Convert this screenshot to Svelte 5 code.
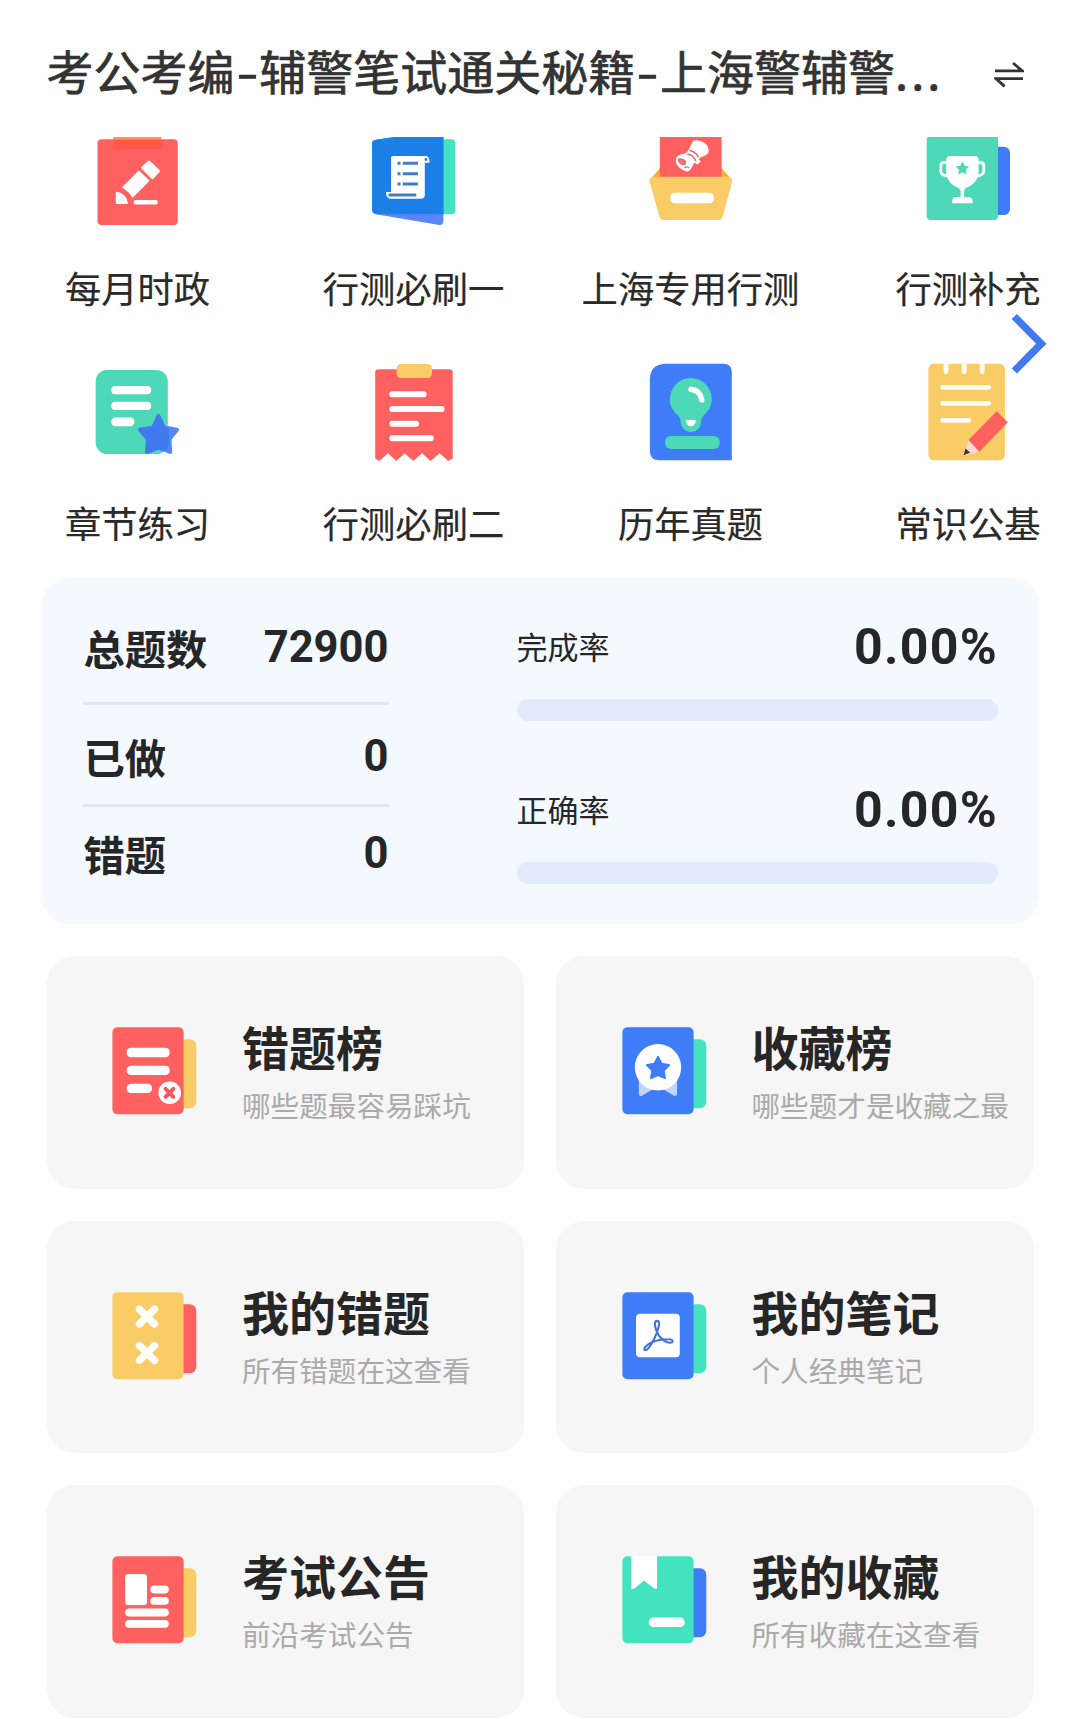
<script>
  const shortcuts = [
    { icon: 'pencil', label: '每月时政' },
    { icon: 'scroll', label: '行测必刷一' },
    { icon: 'box', label: '上海专用行测' },
    { icon: 'trophy', label: '行测补充' },
    { icon: 'starDoc', label: '章节练习' },
    { icon: 'receipt', label: '行测必刷二' },
    { icon: 'bulb', label: '历年真题' },
    { icon: 'notepad', label: '常识公基' },
  ];

  const totals = [
    { label: '总题数', value: '72900' },
    { label: '已做', value: '0' },
    { label: '错题', value: '0' },
  ];

  const rates = [
    { label: '完成率', value: 0 },
    { label: '正确率', value: 0 },
  ];

  const cards = [
    { icon: 'wrongRank', front: 'red', back: 'yellow', title: '错题榜', text: '哪些题最容易踩坑' },
    { icon: 'medal', front: 'blue', back: 'mint', title: '收藏榜', text: '哪些题才是收藏之最' },
    { icon: 'crosses', front: 'yellow', back: 'red', title: '我的错题', text: '所有错题在这查看' },
    { icon: 'notes', front: 'blue', back: 'mint', title: '我的笔记', text: '个人经典笔记' },
    { icon: 'news', front: 'red', back: 'yellow', title: '考试公告', text: '前沿考试公告' },
    { icon: 'bookmark', front: 'mint', back: 'blue', title: '我的收藏', text: '所有收藏在这查看' },
  ];
</script>

{#snippet shortcutIcon(name)}
  {#if name === 'pencil'}
    <rect class="red" x="9.5" y="2.3" width="80.2" height="85.7" rx="4" />
    <rect x="25.6" y="0" width="47.6" height="12" fill="#ff5849" />
    <rect x="25.6" y="0" width="47.6" height="2.6" fill="#ff9450" />
    <g class="white" stroke="#fff" stroke-width="2" stroke-linejoin="round">
      <path d="M61 25 70.5 34 64.5 40.6 54.7 30.8Z" stroke-width="3" />
      <path d="M50.8 34.6 60.2 43.7 44.8 59.4 Q41.5 53.5 35.2 50.4Z" />
      <path d="M28.8 55.8 Q37 57 39 66 H28.8Z" />
    </g>
    <rect class="white" x="45.6" y="63" width="24.2" height="4.5" rx="2" />
  {:else if name === 'scroll'}
    <rect class="mint" x="60" y="2.3" width="31.2" height="75" rx="4" />
    <path d="M8 7Q8 3.4 12 2.8L31 0H79.4V84Q79.4 88.6 74 87.8L12 77.2Q8 76.3 8 72Z" fill="#5b86fb" />
    <path d="M8 7Q8 3.4 12 2.8L31 0H79.4V77.2H12Q8 76.3 8 72Z" fill="#1a80e8" />
    <path class="white" d="M29 19H62Q65.5 19.3 65.5 25.8H60.8V58Q60.8 61.7 57 61.7H26Q22 61 22 55H27V21Q27 19 29 19Z" />
    <g stroke="#3f7fc8" stroke-width="3" fill="none">
      <path d="M33.5 26.3h3M33.5 36.7h3M33.5 47h3M38.8 26.3H54M38.8 36.7H54M38.8 47H54M24.5 58H52.3" />
    </g>
    <circle cx="62" cy="22.5" r="1.4" fill="#1a80e8" />
  {:else if name === 'box'}
    <path d="M19 31 9 43H91L80.5 31Z" fill="#f6ae2e" />
    <rect class="red" x="18.8" y="0" width="61.8" height="42" />
    <path class="yellow" d="M13 39.7H87Q92 40 91 45L81.5 80Q80.5 83 77.5 83H22.5Q19.5 83 18.5 80L8.7 45Q7.8 40 13 39.7Z" />
    <rect class="white" x="29.2" y="55.7" width="43.8" height="10.6" rx="4.5" />
    <path class="white" d="M52 4Q53 3 56 3.3Q67.5 5 67.7 14Q67.5 18 60 20L57.5 22L60 24.5L56.5 27.5L53.5 25.5L49.8 32Q48 35.5 44 34Q36.5 31 34.8 24.7Q34.5 18.5 40 17.3Q45 17 47 14Z" />
    <g fill="none" stroke="#e9646c" stroke-width="1.5">
      <path d="M48.5 13.5Q54.5 14.5 57.5 20M46.2 17Q52.5 18 54.8 24" />
      <path d="M37.5 22Q43 21.5 44.5 25Q44 29 40.5 26.8Q37.5 25.5 37.5 22" fill="#f07880" />
      <path d="M43.5 31Q45.5 28.6 48 31" stroke-width="1.2" />
    </g>
  {:else if name === 'trophy'}
    <rect class="blue" x="60" y="9.7" width="32" height="68.3" rx="6" />
    <path class="green" d="M11 0H80V79Q80 83 76 83H13Q8.7 83 8.7 79V2.5Q8.7 0 11 0Z" />
    <path class="white" d="M30.5 19H58.5L60.6 21.5V37Q58.5 47 47.8 51L46.2 53.5V60H52Q54.5 60.5 54.8 66.3H34Q34.2 60.5 36.8 60H42.6V53.5L40.5 51Q30 47 28.2 37V21.5Z" />
    <path d="M29 25.5H26Q22.8 25.5 22.8 29V34Q23 38.8 30 39M60 25.5H62.6Q65.8 25.5 65.8 29V34Q65.5 38.8 58.5 39" fill="none" stroke="#fff" stroke-width="2.8" />
    <path class="green" d="M44.4 24.5 46.5 28.7 51 29.4 47.8 32.7 48.5 37.4 44.4 35.2 40.2 37.4 41 32.7 37.7 29.4 42.3 28.7Z" />
  {:else if name === 'starDoc'}
    <rect class="green" x="7.7" y="7" width="72.1" height="84" rx="11.5" />
    <g class="white">
      <rect x="23.2" y="23" width="40" height="8.2" rx="4" />
      <rect x="23.2" y="38.8" width="40" height="8.2" rx="4" />
      <rect x="23.2" y="54.6" width="23.2" height="8.6" rx="4.2" />
    </g>
    <path d="M70.5 53 75.8 64.5 89 66.8 81.5 76 82.2 89 70.5 84.5 59 89 59.8 76 52 66.8 65.2 64.5Z" fill="#5487fb" stroke="#5487fb" stroke-width="4" stroke-linejoin="round" />
    <path d="M79.2 67 79.2 80Q78.5 86 75 86.5L70.5 84.5 59 89 59.8 76 52 66.8 65.2 64.5 70.5 53 76 65Z" fill="#3f7bef" stroke="#3f7bef" stroke-width="3.6" stroke-linejoin="round" />
  {:else if name === 'receipt'}
    <path class="red" d="M14.5 6.3H85.5Q88.7 6.3 88.7 9.5V95.5L84.2 97.9 75.6 90.3 66.6 97.9 58 90.3 49.4 97.9 40.6 90.3 32.2 97.9 24 90.3 15.3 97.9 11.2 95.5V9.5Q11.2 6.3 14.5 6.3Z" />
    <rect class="yellow" x="32.6" y="1" width="35.4" height="14" rx="4.5" />
    <path d="M28.3 31.3H59.6M28.3 46H77.5M28.3 60.7H52M28.3 75.3H66.8" fill="none" stroke="#fff" stroke-width="6" stroke-linecap="round" />
  {:else if name === 'bulb'}
    <path class="blue" d="M24 .7H82Q90.8 .7 90.8 9V97.3H18Q8.9 97.3 8.9 88V15.5Q9.5 1.5 24 .7Z" />
    <path class="green" d="M49.8 15A21 21.3 0 0 0 28.8 36.3C28.8 43 32 48 36 51.5Q39.8 55 39.6 59.3A10.2 10 0 0 0 60 59.3Q59.8 55 63.6 51.5C67.6 48 70.8 43 70.8 36.3A21 21.3 0 0 0 49.8 15Z" />
    <path d="M50 26.3Q59.5 27.5 60.8 37" fill="none" stroke="#fff" stroke-width="5.4" stroke-linecap="round" />
    <path class="white" d="M44.7 57.5Q49.8 55.8 55 57.5 54 63.3 49.8 63.3 45.7 63.3 44.7 57.5Z" />
    <rect class="green" x="24" y="73" width="54.8" height="13" rx="6" />
  {:else if name === 'notepad'}
    <rect class="yellow" x="10.4" y=".7" width="76.5" height="96.6" rx="5.5" />
    <path d="M28 0V8.8M46.2 0V8.8M64.2 0V8.8M24.5 24.3H70.8M24.5 40.3H70.8M24.5 57.3H50.8" fill="none" stroke="#fffdf2" stroke-width="4.8" stroke-linecap="round" />
    <path d="M50.7 77 61.4 88.7 45.8 92.2Z" fill="#f8d9d4" />
    <path d="M47.5 85.5 52.2 89.5 45.6 92.3Z" fill="#40382c" />
    <path class="red" d="M78.6 48.3 89.8 59.3 61.4 88.7 50.5 77Z" />
  {/if}
{/snippet}

{#snippet cardIcon(name)}
  {#if name === 'wrongRank'}
    <g class="white">
      <rect x="14.7" y="20.8" width="43" height="9.4" rx="4.2" />
      <rect x="14.7" y="38.7" width="43" height="9.4" rx="4.2" />
      <rect x="14.7" y="56.7" width="25.3" height="9.2" rx="4.2" />
      <circle cx="57.7" cy="65.7" r="11.3" />
    </g>
    <path d="M53.6 61.8 61.4 69.8M61.4 61.8 53.6 69.8" stroke="#f2595e" stroke-width="4" stroke-linecap="round" />
  {:else if name === 'medal'}
    <path d="M16.7 52H55.2L55 67Q54.7 69.5 52 68.8L42.3 63H29.5L20 68.8Q17 69.8 16.9 67Z" fill="#c3d4fe" />
    <circle class="white" cx="36" cy="40.3" r="23.2" />
    <path class="blue" d="M36 30 39.5 36.8 47 38 41.7 43.6 43 51 36 48 29 51 30.3 43.6 25 38 32.5 36.8Z" stroke="#3f7cf8" stroke-width="2" stroke-linejoin="round" />
  {:else if name === 'crosses'}
    <path d="M27.5 17.2 42.5 32M42.5 17.2 27.5 32M27.5 53.6 42.5 68.4M42.5 53.6 27.5 68.4" stroke="#fffefa" stroke-width="7.4" stroke-linecap="round" />
  {:else if name === 'notes'}
    <rect class="white" x="14" y="21.7" width="43.8" height="43.6" rx="4" />
    <path d="M35 28.9C32.2 28.9 32.5 34 34.5 39C37 45 42 50 48 50.8C52 51 51.5 47 46.5 47.2C41 47.2 35 48 30.5 50C25 52.5 21.5 56 22.5 57.7C24 59.3 27 56 29.5 52C32 47.5 36 38 37 33C37.5 30 36.5 28.9 35 28.9Z" fill="none" stroke="#4673d8" stroke-width="2.1" />
  {:else if name === 'news'}
    <g class="white">
      <rect x="13.2" y="18" width="21.8" height="31" rx="3" />
      <rect x="38.3" y="29.6" width="18.5" height="7.8" rx="3.8" />
      <rect x="38.3" y="41" width="18.5" height="7.8" rx="3.8" />
      <rect x="13.2" y="52.6" width="43.6" height="7.8" rx="3.8" />
      <rect x="13.2" y="63.9" width="43.6" height="7.8" rx="3.8" />
    </g>
  {:else if name === 'bookmark'}
    <path class="white" d="M9.3 0H35V32.7H32.5L22 24.6 12 32.7H9.3Z" />
    <rect class="white" x="26.7" y="61.6" width="36" height="9.4" rx="4.4" />
  {/if}
{/snippet}

<main>
  <header>
    <h1>考公考编<span class="dash">-</span>辅警笔试通关秘籍<span class="dash">-</span>上海警辅警<span class="dots">...</span></h1>
    <svg class="swap" width="30" height="30" viewBox="0 0 30 30" aria-hidden="true">
      <path d="M1 11.8H28.2L19 4M29 19.6H2L10.6 27.4" />
    </svg>
  </header>

  <nav>
    {#each shortcuts as item, i}
      <div class="shortcut">
        <svg width="100" height={i < 4 ? 100 : 109} viewBox="0 0 100 {i < 4 ? 100 : 109}" aria-hidden="true">
          {@render shortcutIcon(item.icon)}
        </svg>
        <span>{item.label}</span>
      </div>
    {/each}
    <svg class="next" width="40" height="66" viewBox="0 0 40 66" aria-hidden="true">
      <path d="M5.3 6.5 32.3 33.7 5.3 61" />
    </svg>
  </nav>

  <section class="stats">
    <div class="totals">
      {#each totals as row}
        <div class="total">
          <b>{row.label}</b>
          <strong>{row.value}</strong>
        </div>
      {/each}
    </div>
    <div class="rates">
      {#each rates as rate}
        <div class="rate">
          <div class="rate-head">
            <span>{rate.label}</span>
            <strong>{rate.value.toFixed(2)}%</strong>
          </div>
          <div class="track"><div class="fill" style="width: {rate.value}%"></div></div>
        </div>
      {/each}
    </div>
  </section>

  <section class="cards">
    {#each cards as card}
      <article>
        <svg width="86" height="88" viewBox="0 0 86 88" aria-hidden="true">
          <rect class={card.back} x="50" y="12.2" width="34.3" height="69" rx="6.5" />
          <rect class={card.front} x=".4" y=".2" width="71.2" height="87" rx="5" />
          {@render cardIcon(card.icon)}
        </svg>
        <div class="copy">
          <h2>{card.title}</h2>
          <p>{card.text}</p>
        </div>
      </article>
    {/each}
  </section>
</main>

<style>
  :global(body) {
    margin: 0;
    background: #fefefe;
  }
  main {
    width: 1080px;
    height: 1719px;
    overflow: hidden;
    font-family: 'Noto Sans CJK SC', sans-serif;
    color: #242628;
  }
  svg {
    display: block;
    flex: none;
  }
  .red { fill: #ff6161; }
  .yellow { fill: #f9cc65; }
  .blue { fill: #3f7cf8; }
  .mint { fill: #44e3c0; }
  .green { fill: #4dd8b7; }
  .white { fill: #fff; }

  header {
    box-sizing: border-box;
    height: 137px;
    padding: 2px 56px 0 46.5px;
    display: flex;
    align-items: center;
    justify-content: space-between;
  }
  h1 {
    margin: 0;
    font-size: 47px;
    line-height: 60px;
    font-weight: 400;
    color: #333;
    white-space: nowrap;
    -webkit-text-stroke: 0.7px #333;
  }
  .dash {
    display: inline-block;
    width: 24.8px;
    text-align: center;
    transform: scaleX(1.35);
  }
  .dots {
    letter-spacing: 3px;
  }
  .swap {
    margin-top: 8px;
  }
  .swap path {
    fill: none;
    stroke: #333;
    stroke-width: 2.8;
  }

  nav {
    position: relative;
    height: 441px;
    display: grid;
    grid-template-columns: 275px 277px 277px 278px;
    grid-template-rows: 226px 215px;
  }
  .shortcut {
    display: flex;
    flex-direction: column;
    align-items: center;
    gap: 26px;
  }
  .shortcut span {
    font-size: 36.3px;
    line-height: 48px;
    color: #2a2a2a;
    white-space: nowrap;
    -webkit-text-stroke: 0.2px #2a2a2a;
  }
  .next {
    position: absolute;
    top: 173px;
    right: 31px;
  }
  .next path {
    fill: none;
    stroke: #4179ef;
    stroke-width: 7.4;
  }

  .stats {
    box-sizing: border-box;
    height: 346px;
    margin: 0 41.5px;
    padding: 0 41px;
    border-radius: 27px;
    background: #f4f8ff;
    display: flex;
    justify-content: space-between;
  }
  .totals {
    width: 306px;
    display: grid;
    grid-template-rows: 126.5px 102.5px 1fr;
  }
  .total {
    box-sizing: border-box;
    display: flex;
    justify-content: space-between;
    padding: 44px 0 0 1px;
    line-height: 50px;
    font-size: 41.3px;
  }
  .total:not(:last-child) {
    border-bottom: 3px solid #e2e6f0;
  }
  .total:nth-child(2) { padding-top: 26px; }
  .total:last-child { padding-top: 21px; }
  strong {
    font-family: Roboto, sans-serif;
    font-weight: 700;
  }
  .total strong {
    font-size: 43.5px;
    margin-top: 1px;
  }
  .rates {
    width: 481px;
    padding-top: 38px;
    display: flex;
    flex-direction: column;
    gap: 58px;
  }
  .rate-head {
    display: flex;
    justify-content: space-between;
    height: 60px;
    line-height: 60px;
    font-size: 31px;
  }
  .rate-head strong {
    margin: 1px -0.5px 0 0;
    font-size: 50px;
    letter-spacing: 1.3px;
  }
  .track {
    margin-top: 23px;
    height: 22px;
    border-radius: 11px;
    background: #e3eafc;
    overflow: hidden;
  }
  .fill {
    height: 100%;
    background: #3f7cf8;
  }

  .cards {
    margin: 32px 46.5px 0;
    display: grid;
    grid-template-columns: 477.5px 477.5px;
    grid-auto-rows: 232.6px;
    gap: 32px;
  }
  article {
    box-sizing: border-box;
    padding: 0 0 2px 65.5px;
    border-radius: 28px;
    background: #f6f6f6;
    display: flex;
    align-items: center;
    gap: 44px;
  }
  .copy {
    padding-top: 6px;
  }
  h2 {
    margin: 0;
    font-size: 47px;
    line-height: 62px;
    font-weight: 700;
    color: #262626;
  }
  p {
    margin: 0;
    font-size: 28.6px;
    line-height: 56px;
    color: #aaa;
    white-space: nowrap;
  }
</style>
